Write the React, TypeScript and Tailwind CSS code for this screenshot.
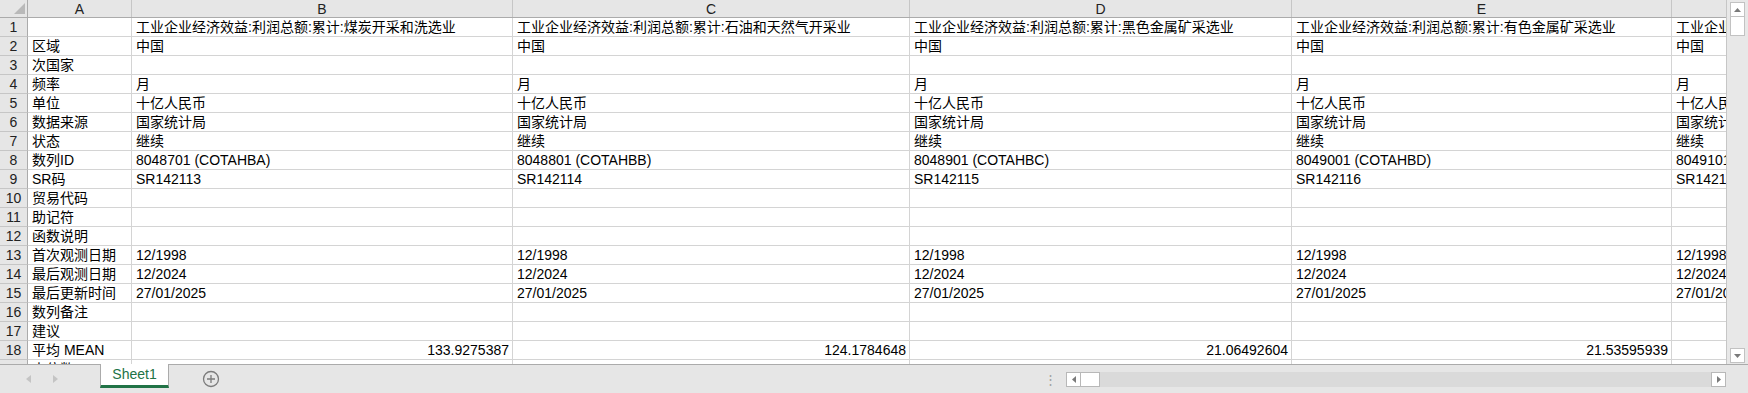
import React from "react";

const colWidths = [104, 381, 397, 382, 380, 200];
const letters = ["A", "B", "C", "D", "E", "F"];

const labels = [
  "",
  "区域",
  "次国家",
  "频率",
  "单位",
  "数据来源",
  "状态",
  "数列ID",
  "SR码",
  "贸易代码",
  "助记符",
  "函数说明",
  "首次观测日期",
  "最后观测日期",
  "最后更新时间",
  "数列备注",
  "建议",
  "平均 MEAN",
  "中位数",
];

const series = [
  { name: "煤炭开采和洗选业", id: "8048701 (COTAHBA)", sr: "SR142113", mean: "133.9275387" },
  { name: "石油和天然气开采业", id: "8048801 (COTAHBB)", sr: "SR142114", mean: "124.1784648" },
  { name: "黑色金属矿采选业", id: "8048901 (COTAHBC)", sr: "SR142115", mean: "21.06492604" },
  { name: "有色金属矿采选业", id: "8049001 (COTAHBD)", sr: "SR142116", mean: "21.53595939" },
  { name: "非金属矿采选业", id: "8049101 (COTAHBE)", sr: "SR142117", mean: "" },
];

function columnCells(s: (typeof series)[number]) {
  return [
    "工业企业经济效益:利润总额:累计:" + s.name,
    "中国",
    "",
    "月",
    "十亿人民币",
    "国家统计局",
    "继续",
    s.id,
    s.sr,
    "",
    "",
    "",
    "12/1998",
    "12/2024",
    "27/01/2025",
    "",
    "",
    s.mean,
    "",
  ];
}

const columns = series.map(columnCells);

export default function App() {
  return (
    <div
      className="w-[1748px] h-[393px] overflow-hidden bg-[#e6e6e6] flex flex-col text-[14px] text-black"
      style={{ fontFamily: '"Liberation Sans", "Noto Sans CJK SC", sans-serif' }}
    >
      <div className="h-[365px] flex border-b border-[#ababab]">
        {/* grid */}
        <div className="w-[1727px] shrink-0 h-[364px] overflow-hidden bg-white border-r border-[#c6c6c6] flex flex-col">
          {/* header row */}
          <div className="flex h-[18px] shrink-0 bg-[#e6e6e6] border-b border-[#ababab]">
            <div className="w-[28px] shrink-0 h-full border-r border-[#ababab]">
              <svg width="28" height="17" className="block">
                <polygon points="25,3 25,14 14,14" fill="#b9b9b9" />
              </svg>
            </div>
            {letters.map((l, i) => (
              <div
                key={l}
                style={{ width: colWidths[i] }}
                className="shrink-0 h-full border-r border-[#c6c6c6] flex items-center justify-center text-[#222] leading-none"
              >
                {l}
              </div>
            ))}
          </div>
          {/* data rows */}
          {labels.map((label, r) => (
            <div key={r} className="flex h-[19px] shrink-0">
              <div className="w-[28px] shrink-0 h-full bg-[#e6e6e6] border-r border-[#ababab] border-b border-b-[#c6c6c6] flex items-center justify-center text-[#222] leading-none">
                {r + 1}
              </div>
              <div
                style={{ width: colWidths[0] }}
                className="shrink-0 h-full border-r border-b border-[#d4d4d4] pl-[4px] leading-[18px] whitespace-nowrap"
              >
                {label}
              </div>
              {columns.map((col, c) => {
                const v = col[r];
                const right = r === 17;
                return (
                  <div
                    key={c}
                    style={{ width: colWidths[c + 1] }}
                    className={
                      "shrink-0 h-full border-r border-b border-[#d4d4d4] leading-[18px] whitespace-nowrap overflow-hidden " +
                      (right ? "text-right pr-[3px]" : "pl-[4px]")
                    }
                  >
                    {v}
                  </div>
                );
              })}
            </div>
          ))}
        </div>
        {/* vertical scrollbar */}
        <div className="w-[21px] h-full bg-[#e8e8e8] flex flex-col items-center pt-[2px]">
          <div className="w-[15px] h-[15px] bg-white border border-[#c2c2c2] flex items-center justify-center">
            <svg width="7" height="4">
              <polygon points="0,4 7,4 3.5,0" fill="#7a7a7a" />
            </svg>
          </div>
          <div className="w-[15px] h-[19px] bg-white border border-[#c2c2c2] border-t-0" />
          <div className="flex-1" />
          <div className="w-[15px] h-[15px] bg-white border border-[#c2c2c2] flex items-center justify-center mb-[1px]">
            <svg width="7" height="4">
              <polygon points="0,0 7,0 3.5,4" fill="#7a7a7a" />
            </svg>
          </div>
        </div>
      </div>

      {/* sheet tab bar */}
      <div className="h-[28px] flex items-start">
        <div className="w-[100px] h-full flex items-center pl-[26px] gap-[22px]">
          <svg width="5" height="8">
            <polygon points="5,0 5,8 0,4" fill="#c4c4c4" />
          </svg>
          <svg width="5" height="8">
            <polygon points="0,0 0,8 5,4" fill="#c4c4c4" />
          </svg>
        </div>
        <div className="w-[69px] h-[24px] -mt-px bg-white border-x border-[#ababab] border-b-[3px] border-b-[#217346] flex items-center justify-center text-[#217346]">
          Sheet1
        </div>
        <div className="h-full flex items-center ml-[33px]">
          <svg width="18" height="18" viewBox="0 0 18 18">
            <circle cx="9" cy="9" r="7.5" fill="none" stroke="#7b7b7b" strokeWidth="1.3" />
            <path d="M9 5v8M5 9h8" stroke="#7b7b7b" strokeWidth="1.3" />
          </svg>
        </div>
        <div className="flex-1" />
        <div className="w-[704px] h-full flex items-center">
          <div className="w-[12px] text-center text-[#a0a0a0] leading-none text-[13px]">⋮</div>
          <div className="w-[10px]" />
          <div className="w-[15px] h-[15px] bg-white border border-[#b8b8b8] flex items-center justify-center">
            <svg width="4" height="7">
              <polygon points="4,0 4,7 0,3.5" fill="#7a7a7a" />
            </svg>
          </div>
          <div className="w-[19px] h-[15px] bg-white border border-[#b8b8b8] border-l-0" />
          <div className="flex-1 h-[15px] bg-[#dadada]" />
          <div className="w-[15px] h-[15px] bg-white border border-[#b8b8b8] flex items-center justify-center">
            <svg width="4" height="7">
              <polygon points="0,0 0,7 4,3.5" fill="#7a7a7a" />
            </svg>
          </div>
          <div className="w-[22px]" />
        </div>
      </div>
    </div>
  );
}
